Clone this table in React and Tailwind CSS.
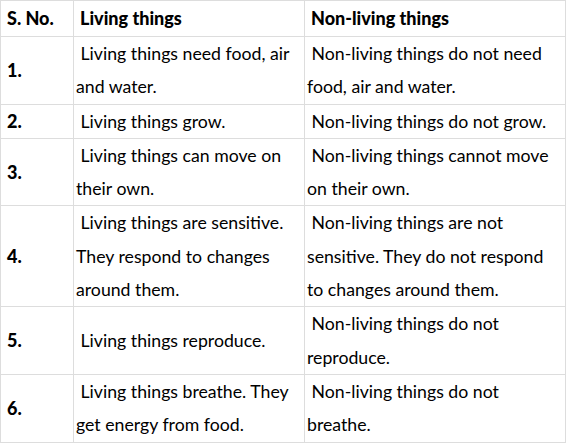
import React from "react";

const rows = [
  {
    no: "1.",
    living: "Living things need food, air and water.",
    nonLiving: "Non-living things do not need food, air and water.",
  },
  {
    no: "2.",
    living: "Living things grow.",
    nonLiving: "Non-living things do not grow.",
  },
  {
    no: "3.",
    living: "Living things can move on their own.",
    nonLiving: "Non-living things cannot move on their own.",
  },
  {
    no: "4.",
    living: "Living things are sensitive. They respond to changes around them.",
    nonLiving:
      "Non-living things are not sensitive. They do not respond to changes around them.",
  },
  {
    no: "5.",
    living: "Living things reproduce.",
    nonLiving: "Non-living things do not reproduce.",
  },
  {
    no: "6.",
    living: "Living things breathe. They get energy from food.",
    nonLiving: "Non-living things do not breathe.",
  },
];

const cell = "border border-[#dddddd] align-middle";

export default function App() {
  return (
    <div className="bg-white min-h-screen text-black font-['Lato',_'Noto_Sans',_sans-serif]">
      <table className="table-fixed border-collapse w-[565px] text-[17.7px]">
        <colgroup>
          <col className="w-[73px]" />
          <col className="w-[231px]" />
          <col className="w-[261px]" />
        </colgroup>
        <thead>
          <tr className="h-[36px] text-[18px]">
            <th className={`${cell} px-[6px] text-left font-black`}>S. No.</th>
            <th className={`${cell} px-[6px] text-left font-black`}>
              Living things
            </th>
            <th className={`${cell} px-[6px] text-left font-black`}>
              Non-living things
            </th>
          </tr>
        </thead>
        <tbody className="leading-[33.3px]">
          {rows.map((r) => (
            <tr key={r.no}>
              <td className={`${cell} px-[6px] font-black text-[18px]`}>
                {r.no}
              </td>
              <td className={`${cell} px-[2px]`}>{"\u00a0" + r.living}</td>
              <td className={`${cell} px-[2px]`}>{"\u00a0" + r.nonLiving}</td>
            </tr>
          ))}
        </tbody>
      </table>
    </div>
  );
}
